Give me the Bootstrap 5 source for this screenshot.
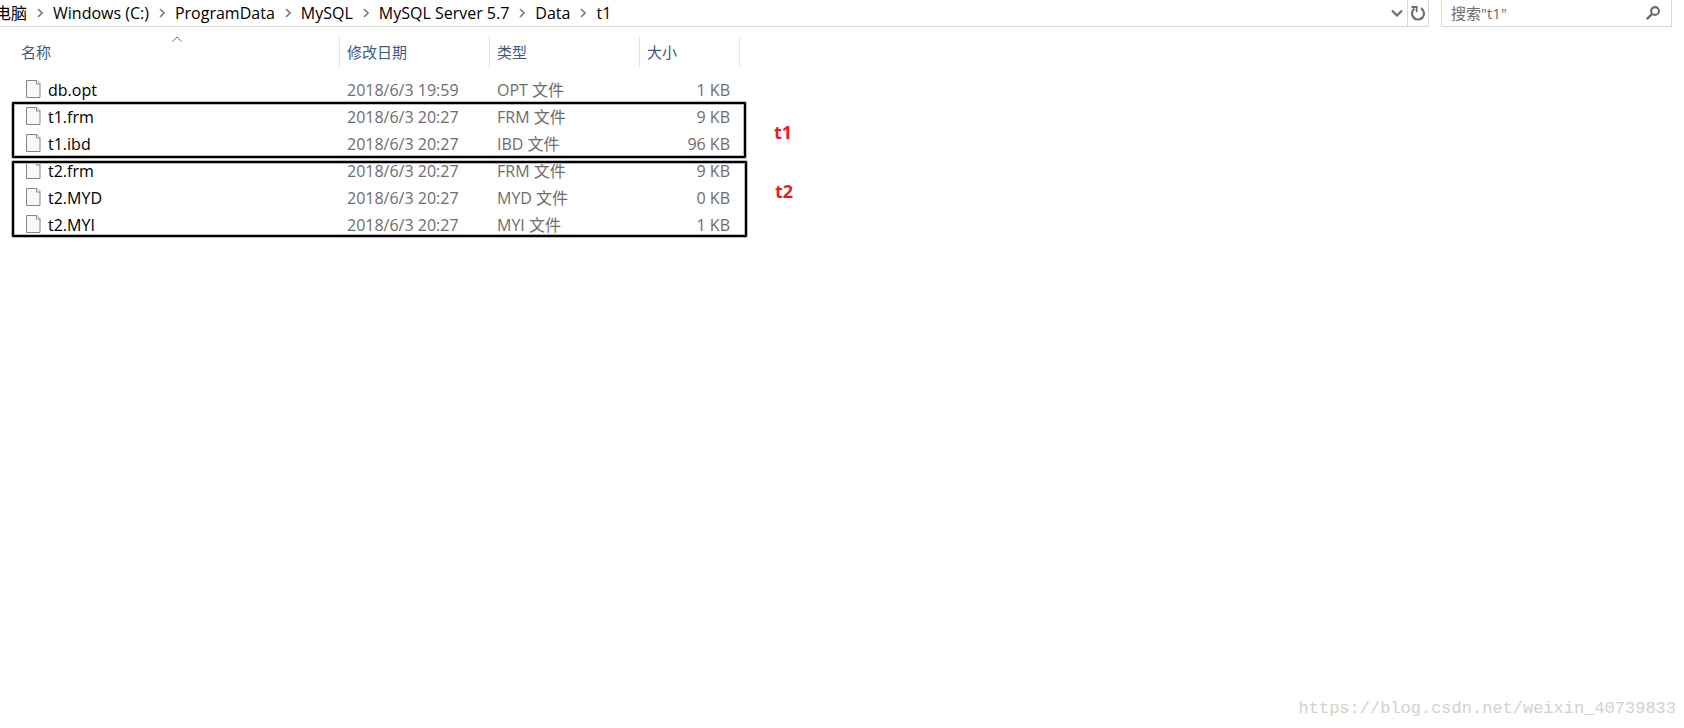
<!DOCTYPE html>
<html lang="zh-CN">
<head>
<meta charset="utf-8">
<meta name="viewport" content="width=device-width, initial-scale=1">
<title>t1</title>
<link href="https://cdn.jsdelivr.net/npm/bootstrap@5.3.0/dist/css/bootstrap.min.css" rel="stylesheet">
<style>
  body { font-family: "Open Sans", "Noto Sans CJK SC", sans-serif; font-size: 16px; line-height: 24px; color: #000; background: #fff; }
  .top-bar { height: 27px; padding-right: 12px; gap: 12px; }
  .address { border: solid #d9d9d9; border-width: 0 1px 1px 0; }
  .crumbs { gap: 10px; margin-left: -5px; padding-bottom: 1px; }
  .crumbs li { gap: 10px; }
  .crumbs a { color: #000; text-decoration: none; }
  .bar-btn { border: 0; background: none; padding: 0; width: 20px; color: #6e6e6e; }
  .bar-btn.refresh { border-left: 1px solid #d9d9d9; width: 21px; }
  .search { width: 231px; border: solid #d9d9d9; border-width: 0 1px 1px; padding: 0 8px 0 9px; }
  .search input { border: 0; outline: 0; padding: 0; background: none; color: #6d6d6d; min-width: 0; font-size: 15px; }
  .search input::placeholder { color: #6d6d6d; opacity: 1; }
  .files { table-layout: fixed; width: 740px; margin-top: 9px; border-collapse: separate; border-spacing: 0; }
  .files th { height: 32px; padding: 0 0 0 7px; font-size: 15px; font-weight: 400; color: #42597a; border-right: 1px solid #e5e5e5; position: relative; }
  .files th:first-child { padding-left: 21px; }
  .files td { height: 27px; line-height: 24px; padding: 0 0 1px 7px; color: #6d6d6d; vertical-align: middle; white-space: nowrap; }
  .files td:first-child { color: #000; padding-left: 26px; }
  .files td:last-child { text-align: right; padding-right: 10px; }
  .files thead::after { content: ""; display: block; height: 9px; }
  .doc { margin: 2px 7px 0 0; }
  .sort { left: 172px; top: 0; }
  .mark-box { left: 12px; border: 2px solid #000; box-shadow: 0 0 0 1px #bbb, inset 0 0 0 1px #bbb; border-radius: 1px; pointer-events: none; }
  .box-one { top: 75px; width: 734px; height: 56px; }
  .box-two { top: 134px; width: 735px; height: 76px; }
  .mark-label { left: 100%; margin-left: 30px; top: 16px; color: #ed1c24; font-size: 18px; font-weight: 700; }
  .source { color: #d2d2cb; font-family: "Liberation Mono", monospace; font-size: 17px; padding: 0 8px 7px 0; }
</style>
</head>
<body class="d-flex flex-column min-vh-100">
<svg class="d-none" aria-hidden="true">
  <symbol id="sep" viewBox="0 0 6 10"><path d="M1 1l4 4-4 4" fill="none" stroke="#7a7a7a" stroke-width="1.6"/></symbol>
  <symbol id="file" viewBox="0 0 15 18"><path d="M.5.5h10.500l3 3v14H.5z" fill="#f6f8f9"/><path d="M.5 17.500V.5h10.500l3 3v14z" fill="none" stroke="#858585"/><path d="M10.500.5v3.500h3.500" fill="#fff" stroke="#858585"/></symbol>
</svg>

<header class="top-bar d-flex">
  <nav class="address d-flex flex-grow-1" aria-label="地址">
    <ol class="crumbs list-unstyled d-flex align-items-center mb-0 me-auto text-nowrap">
      <li class="d-flex align-items-center"><a href="#">电脑</a><svg width="6" height="10"><use href="#sep"/></svg></li>
      <li class="d-flex align-items-center"><a href="#">Windows (C:)</a><svg width="6" height="10"><use href="#sep"/></svg></li>
      <li class="d-flex align-items-center"><a href="#">ProgramData</a><svg width="6" height="10"><use href="#sep"/></svg></li>
      <li class="d-flex align-items-center"><a href="#">MySQL</a><svg width="6" height="10"><use href="#sep"/></svg></li>
      <li class="d-flex align-items-center"><a href="#">MySQL Server 5.7</a><svg width="6" height="10"><use href="#sep"/></svg></li>
      <li class="d-flex align-items-center"><a href="#">Data</a><svg width="6" height="10"><use href="#sep"/></svg></li>
      <li><a href="#">t1</a></li>
    </ol>
    <button class="bar-btn d-flex align-items-center justify-content-center" type="button" aria-label="历史记录"><svg width="12" height="8" viewBox="0 0 12 8"><path d="M1 1.500l5 5 5-5" fill="none" stroke="currentColor" stroke-width="2.200"/></svg></button>
    <button class="bar-btn refresh d-flex align-items-center justify-content-center" type="button" aria-label="刷新"><svg width="16" height="16" viewBox="0 0 16 16"><path d="M11 3.300a6 6 0 1 1-6.500.3" fill="none" stroke="currentColor" stroke-width="2.200"/><path d="M1.500 2h5.200v5.200" fill="none" stroke="currentColor" stroke-width="1.800"/></svg></button>
  </nav>
  <form class="search d-flex align-items-center" role="search">
    <input class="flex-grow-1" type="text" placeholder='搜索"t1"' aria-label="搜索">
    <button class="bar-btn d-flex align-items-center justify-content-center" type="button" aria-label="搜索"><svg width="14" height="14" viewBox="0 0 14 14"><circle cx="9" cy="5" r="3.900" fill="none" stroke="currentColor" stroke-width="2.100"/><path d="M6.200 7.800L.8 13.200" stroke="currentColor" stroke-width="2.400"/></svg></button>
  </form>
</header>

<main class="position-relative">
  <table class="files">
    <colgroup><col style="width:340px"><col style="width:150px"><col style="width:150px"><col style="width:100px"></colgroup>
    <thead>
      <tr><th scope="col">名称<svg class="sort position-absolute" width="10" height="6" viewBox="0 0 10 6"><path d="M.5 5.500L5 1l4.500 4.500" fill="none" stroke="#6d6d6d"/></svg></th><th scope="col">修改日期</th><th scope="col">类型</th><th scope="col">大小</th></tr>
    </thead>
    <tbody>
      <tr><td><div class="d-flex"><svg class="doc" width="15" height="18"><use href="#file"/></svg>db.opt</div></td><td>2018/6/3 19:59</td><td>OPT 文件</td><td>1 KB</td></tr>
      <tr><td><div class="d-flex"><svg class="doc" width="15" height="18"><use href="#file"/></svg>t1.frm</div></td><td>2018/6/3 20:27</td><td>FRM 文件</td><td>9 KB</td></tr>
      <tr><td><div class="d-flex"><svg class="doc" width="15" height="18"><use href="#file"/></svg>t1.ibd</div></td><td>2018/6/3 20:27</td><td>IBD 文件</td><td>96 KB</td></tr>
      <tr><td><div class="d-flex"><svg class="doc" width="15" height="18"><use href="#file"/></svg>t2.frm</div></td><td>2018/6/3 20:27</td><td>FRM 文件</td><td>9 KB</td></tr>
      <tr><td><div class="d-flex"><svg class="doc" width="15" height="18"><use href="#file"/></svg>t2.MYD</div></td><td>2018/6/3 20:27</td><td>MYD 文件</td><td>0 KB</td></tr>
      <tr><td><div class="d-flex"><svg class="doc" width="15" height="18"><use href="#file"/></svg>t2.MYI</div></td><td>2018/6/3 20:27</td><td>MYI 文件</td><td>1 KB</td></tr>
    </tbody>
  </table>
  <div class="mark-box box-one position-absolute"><span class="mark-label position-absolute">t1</span></div>
  <div class="mark-box box-two position-absolute"><span class="mark-label position-absolute">t2</span></div>
</main>

<footer class="source mt-auto text-end">https://blog.csdn.net/weixin_40739833</footer>
<script src="https://cdn.jsdelivr.net/npm/bootstrap@5.3.0/dist/js/bootstrap.bundle.min.js"></script>
</body>
</html>
